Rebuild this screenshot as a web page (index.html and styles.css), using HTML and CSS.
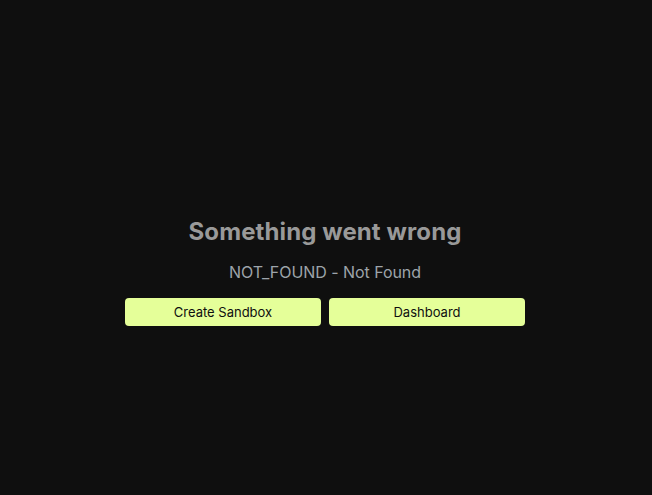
FILE: index.html
```html
<!DOCTYPE html>
<html>
<head>
<meta charset="utf-8">
<link rel="stylesheet" href="styles.css">
</head>
<body>
<main class="page">
  <h1 class="title">Something went wrong</h1>
  <p class="subtitle">NOT_FOUND - Not Found</p>
  <div class="actions">
    <button class="btn">Create Sandbox</button>
    <button class="btn">Dashboard</button>
  </div>
</main>
</body>
</html>
```
FILE: styles.css
```css
html, body {
  margin: 0;
  height: 100%;
  background: #0f0f0f;
  font-family: Inter, "Noto Sans", sans-serif;
}
.page {
  display: flex;
  flex-direction: column;
  align-items: center;
  padding-top: 216px;
}
.title {
  margin: 0 2px 0 0;
  font-size: 24px;
  line-height: 32px;
  font-weight: 700;
  color: #999999;
  letter-spacing: 0.1px;
}
.subtitle {
  margin: 12px 2px 0 0;
  font-size: 16px;
  line-height: 24px;
  color: #9da4aa;
  letter-spacing: -0.05px;
}
.actions {
  display: flex;
  gap: 8px;
  margin-top: 14px;
  margin-right: 2px;
}
.btn {
  width: 196px;
  height: 28px;
  border: none;
  border-radius: 4px;
  background: #e5ff99;
  color: #0f0f0f;
  font-family: Inter, "Noto Sans", sans-serif;
  font-size: 13px;
  padding: 0;
}
```
